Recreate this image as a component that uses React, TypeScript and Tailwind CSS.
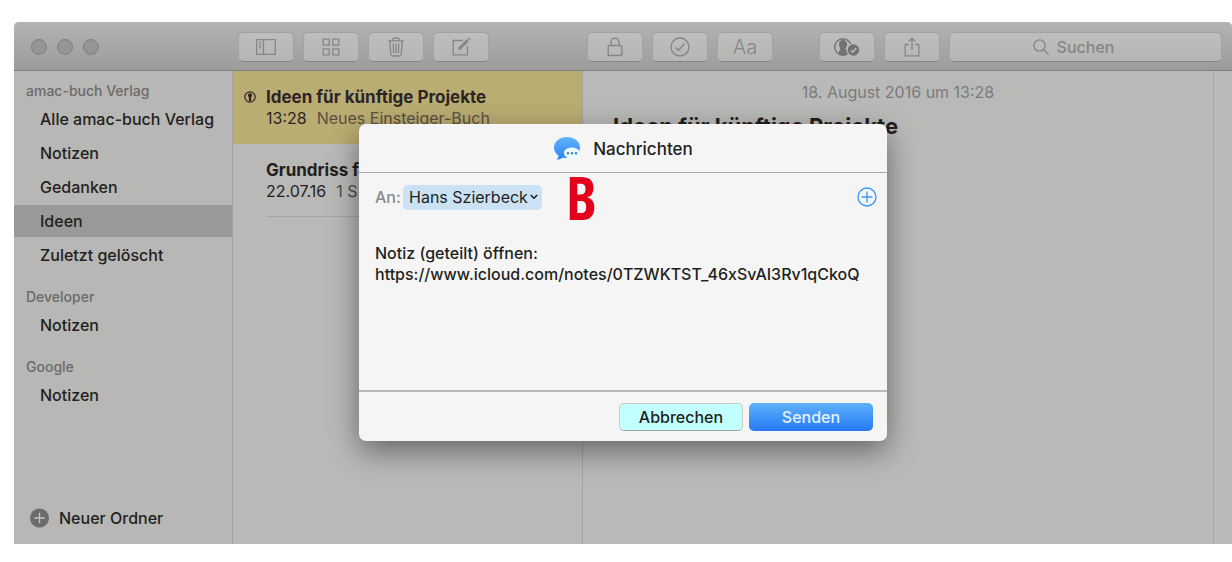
import type { ReactNode } from "react";

const sans = "font-['Inter','Liberation_Sans',sans-serif] font-medium";

function ToolButton({ label, children }: { label: string; children: ReactNode }) {
  return (
    <button
      type="button"
      aria-label={label}
      className="flex h-[30px] w-14 shrink-0 items-center justify-center rounded-[5px] border border-[#a2a2a1] border-b-[#848484] bg-linear-to-b from-[#bebebd] to-[#b6b6b5] text-[#868686]"
    >
      {children}
    </button>
  );
}

function Folder({ name, selected = false }: { name: string; selected?: boolean }) {
  return (
    <li className={selected ? "bg-[#999998]" : ""}>
      <a
        href="#"
        aria-current={selected ? "page" : undefined}
        className="block h-8 pl-[26px] text-base leading-8 whitespace-nowrap text-[#231f20]"
      >
        {name}
      </a>
    </li>
  );
}

function Account({ name, folders, selected }: { name: string; folders: string[]; selected?: string }) {
  return (
    <section className="mb-[14px]">
      <h2 className="h-6 pl-3 text-sm leading-6 text-[#6b6b6a]">{name}</h2>
      <ul className="flex flex-col gap-[2px]">
        {folders.map((f) => (
          <Folder key={f} name={f} selected={f === selected} />
        ))}
      </ul>
    </section>
  );
}

function Toolbar() {
  return (
    <header className="flex h-[49px] shrink-0 items-center border-b border-[#80807f] bg-linear-to-b from-[#b3b3b2] to-[#9c9c9b] pt-px">
      <div className="flex w-[219px] shrink-0 gap-[10px] pl-[17px]">
        {["Schließen", "Minimieren", "Vergrößern"].map((l) => (
          <button key={l} type="button" aria-label={l} className="size-4 rounded-full border border-[#7f7f7f] bg-[#959595]" />
        ))}
      </div>
      <div className="flex w-[350px] shrink-0 gap-[9px] pl-[5px]">
        <ToolButton label="Ordnerliste">
          <svg width="20" height="16" viewBox="0 0 20 16" fill="none" stroke="currentColor" strokeWidth="1.3">
            <path d="M.7.7h18.6v14.6H.7zM7.5.7v14.6M3 3.5h2.2M3 6h2.2M3 8.500h2.200" />
          </svg>
        </ToolButton>
        <ToolButton label="Anhänge">
          <svg width="18" height="18" viewBox="0 0 18 18" fill="none" stroke="currentColor" strokeWidth="1.3">
            <path d="M1.200 1.200h6v6h-6zM10.800 1.200h6v6h-6zM1.200 10.800h6v6h-6zM10.800 10.800h6v6h-6z" />
          </svg>
        </ToolButton>
        <ToolButton label="Löschen">
          <svg width="18" height="20" viewBox="0 0 18 20" fill="none" stroke="currentColor" strokeWidth="1.3">
            <path d="M1 3.800h16M6 3.500V2.200Q6 1 7.200 1h3.600Q12 1 12 2.200v1.300M2.800 4l1 13.500q.1 1.500 1.500 1.500h7.400q1.400 0 1.500-1.500l1-13.500M6.300 6.500l.3 9.500M9 6.500V16M11.700 6.500l-.3 9.500" />
          </svg>
        </ToolButton>
        <ToolButton label="Neue Notiz">
          <svg width="20" height="20" viewBox="0 0 20 20" fill="none" stroke="currentColor" strokeWidth="1.3">
            <path d="M12 3.500H2.200v14.300h14.300V9" />
            <path d="M7.800 10.300L15.800 2.300l2 2-8 8-2.800.8zM17 1.200l.8-.7 1.700 1.700-.8.8z" fill="currentColor" strokeWidth=".4" />
          </svg>
        </ToolButton>
      </div>
      <div className="flex min-w-0 flex-1 gap-[9px] pr-[10px] pl-1">
        <ToolButton label="Notiz sperren">
          <svg width="16" height="20" viewBox="0 0 16 20" fill="none" stroke="currentColor" strokeWidth="1.400">
            <rect x="1.200" y="8.500" width="13.600" height="10" rx="1" />
            <path d="M4 8.500V5.200a4 4 0 0 1 8 0v3.300" />
          </svg>
        </ToolButton>
        <ToolButton label="Checkliste">
          <svg width="20" height="20" viewBox="0 0 20 20" fill="none" stroke="currentColor" strokeWidth="1.400">
            <circle cx="10" cy="10" r="9" />
            <path d="M5.500 10.500l3 3 6-7" />
          </svg>
        </ToolButton>
        <ToolButton label="Format">
          <span className="text-xl font-light">Aa</span>
        </ToolButton>
        <span className="w-7" />
        <ToolButton label="Personen hinzufügen">
          <svg width="28" height="20" viewBox="0 0 28 20" className="text-[#727272]">
            <circle cx="10" cy="10" r="8.300" fill="none" stroke="currentColor" strokeWidth="1.400" />
            <path d="M10 3c2.700 0 4 1.800 4 4.200 0 1.600-.5 2.800-1.200 3.700-.3 1.600.2 2.300 1.500 2.900l-.6 3.700c-2 1.200-5.400 1.200-8.200-.5l.2-2.800c1.300-.6 1.700-1.500 1.500-3C6.500 10.200 6 8.900 6 7.200 6 4.800 7.300 3 10 3z" fill="currentColor" />
            <circle cx="20.500" cy="13" r="6.700" fill="#bababa" />
            <circle cx="20.500" cy="13" r="5.800" fill="currentColor" />
            <path d="M17.700 13.300l2 2 3.500-4.300" fill="none" stroke="#bababa" strokeWidth="1.400" />
          </svg>
        </ToolButton>
        <ToolButton label="Teilen">
          <svg width="16" height="20" viewBox="0 0 16 20" fill="none" stroke="currentColor" strokeWidth="1.300">
            <path d="M5 7.500H1.200v11.300h13.600V7.500H11M8 13V1.500M4.700 4.500L8 1.200l3.300 3.300" />
          </svg>
        </ToolButton>
        <label className="flex h-[30px] min-w-0 flex-1 items-center justify-center gap-2 rounded-[5px] border border-[#a2a2a1] border-b-[#848484] bg-linear-to-b from-[#bebebd] to-[#b6b6b5] pr-6 text-[#868686]">
          <svg width="16" height="16" viewBox="0 0 16 16" fill="none" stroke="currentColor" strokeWidth="1.400">
            <circle cx="6.500" cy="6.500" r="5.600" />
            <path d="M10.600 10.600l5 5" />
          </svg>
          <input
            type="search"
            aria-label="Suchen"
            placeholder="Suchen"
            className="field-sizing-content min-w-0 bg-transparent text-base outline-none placeholder:text-[#868686]"
          />
        </label>
      </div>
    </header>
  );
}

function ShareDialog() {
  return (
    <div
      role="dialog"
      aria-labelledby="dialog-title"
      className="absolute top-[102px] left-1/2 flex h-[317px] w-[528px] -translate-x-1/2 flex-col rounded-[7px] bg-[#f5f5f5] text-[#231f20] shadow-[0_10px_30px_rgba(0,0,0,0.45)]"
    >
      <div className="flex h-[49px] shrink-0 items-center justify-center gap-3 border-b border-[#a9a6a2] pt-[2px]">
        <svg width="28" height="26" viewBox="0 0 28 26">
          <defs>
            <linearGradient id="bubble" x1="0" y1="0" x2="0" y2="1">
              <stop offset="0" stopColor="#62b4fa" />
              <stop offset="1" stopColor="#2c83f2" />
            </linearGradient>
          </defs>
          <path d="M14 1c7.300 0 13 4.500 13 10.500S21.300 22 14 22c-1.600 0-3-.2-4.400-.6-1.500 1.500-3.800 2.200-6.200 2.200 1.300-1 2-2.500 2.200-4C2.700 17.700 1 14.800 1 11.500 1 5.500 6.700 1 14 1z" fill="url(#bubble)" />
          <path d="M18.800 11.500c4.500 0 8 2.300 8 5.500 0 1.800-1 3.300-2.600 4.300.1 1 .5 2 1.300 2.800-1.600 0-3-.5-4-1.400-4.900.9-10.500-1.200-10.500-5.700 0-3.200 3.400-5.500 7.800-5.500z" fill="#e9fbff" />
          <g fill="#3f80c8">
            <rect x="13.800" y="16" width="2.400" height="2.400" rx="1" />
            <rect x="17.800" y="16" width="2.400" height="2.400" rx="1" />
            <rect x="21.800" y="16" width="2.400" height="2.400" rx="1" />
          </g>
        </svg>
        <h1 id="dialog-title" className="text-[17px] leading-6">Nachrichten</h1>
      </div>
      <div className="flex h-12 shrink-0 items-center pr-[10px] pl-4">
        <span className="w-7 text-base text-[#8b8b8b]">An:</span>
        <button type="button" className="flex h-[25px] items-center gap-[2px] rounded-[5px] bg-[#cbe2f5] pr-1 pl-[6px] text-base font-normal">
          Hans Szierbeck
          <svg width="8" height="6" viewBox="0 0 8 6" fill="none" stroke="currentColor" strokeWidth="1.600">
            <path d="M.8 1L4 4.200 7.200 1" />
          </svg>
        </button>
        <span className="flex-1 pl-6 font-['Open_Sans_Condensed','Noto_Sans_Condensed','Roboto_Condensed','Open_Sans',sans-serif] text-[60px] leading-none font-bold text-[#e2001a]">B</span>
        <button type="button" aria-label="Empfänger hinzufügen" className="text-[#3b9cf7]">
          <svg width="20" height="20" viewBox="0 0 20 20" fill="none" stroke="currentColor" strokeWidth="1.400">
            <circle cx="10" cy="10" r="9" />
            <path d="M10 4.500v11M4.500 10h11" />
          </svg>
        </button>
      </div>
      <textarea
        aria-label="Nachricht"
        readOnly
        value={"Notiz (geteilt) öffnen:\nhttps://www.icloud.com/notes/0TZWKTST_46xSvAI3Rv1qCkoQ"}
        className="min-h-0 flex-1 resize-none overflow-hidden bg-transparent pt-[22px] pl-4 text-base leading-[21px] whitespace-pre outline-none"
      />
      <div className="flex h-[51px] shrink-0 items-center justify-end gap-[6px] border-t-2 border-[#b7b9b8] pr-[14px]">
        <button type="button" className="h-7 w-[124px] rounded-[5px] border border-[#c9c9c6] border-b-[#a5a5a3] bg-[#c2ffff] text-base">
          Abbrechen
        </button>
        <button type="button" className="h-7 w-[124px] rounded-[5px] bg-linear-to-b from-[#5fb0fa] to-[#2678f4] text-base text-[#e4f2ff]">
          Senden
        </button>
      </div>
    </div>
  );
}

export default function App() {
  return (
    <div className={`flex h-screen flex-col bg-white pt-[22px] pb-[18px] pl-[14px] ${sans}`}>
      <div className="relative flex min-h-0 flex-1 flex-col overflow-hidden rounded-t-[5px] bg-[#b9b9b8]">
        <Toolbar />
        <div className="flex min-h-0 flex-1">
          <nav className="flex w-[219px] shrink-0 flex-col border-r border-[#a3a3a2] bg-[#b7b7b5] pt-2">
            <Account name="amac-buch Verlag" folders={["Alle amac-buch Verlag", "Notizen", "Gedanken", "Ideen", "Zuletzt gelöscht"]} selected="Ideen" />
            <Account name="Developer" folders={["Notizen"]} />
            <Account name="Google" folders={["Notizen"]} />
            <button type="button" className="mt-auto mb-4 flex items-center gap-[10px] pl-4 text-base leading-5 text-[#231f20]">
              <svg width="19" height="20" viewBox="0 0 20 20">
                <circle cx="10" cy="10" r="10" fill="#6a6c6e" />
                <path d="M10 4.500v11M4.500 10h11" stroke="#c4c4c4" strokeWidth="1.400" />
              </svg>
              Neuer Ordner
            </button>
          </nav>
          <div className="w-[350px] shrink-0 overflow-hidden border-r border-[#a3a3a2]">
            <article className="flex h-[73px] bg-[#baad73] pt-4 text-[#2d2426]">
              <svg width="12" height="12" viewBox="0 0 12 12" className="mt-1 mr-[10px] ml-[11px]">
                <circle cx="6" cy="6" r="5.200" fill="none" stroke="currentColor" strokeWidth="1.200" />
                <path d="M6 2.200c1.400 0 2 .9 2 2.100 0 .9-.4 1.600-.9 2v3.900H4.900V6.300C4.400 5.900 4 5.200 4 4.300c0-1.200.6-2.100 2-2.100z" fill="currentColor" />
              </svg>
              <div>
                <h3 className="text-[17px] leading-5 font-bold">Ideen für künftige Projekte</h3>
                <p className="flex gap-[10px] text-base leading-[22px] font-normal">
                  <span>13:28</span>
                  <span className="text-[#5b5040]">Neues Einsteiger-Buch</span>
                </p>
              </div>
            </article>
            <article className="ml-[33px] h-[73px] border-b border-[#a6a6a5] pt-4 text-[#231f20]">
              <h3 className="text-[17px] leading-5 font-bold">Grundriss f</h3>
              <p className="flex gap-[10px] text-base leading-[22px] font-normal">
                <span>22.07.16</span>
                <span className="text-[#4c4c4c]">1 S</span>
              </p>
            </article>
          </div>
          <main className="min-w-0 flex-1 border-r border-[#a8a8a7] px-[30px] pt-[11px]">
            <p className="text-center text-base leading-5 font-normal text-[#7b7b7b]">18. August 2016 um 13:28</p>
            <h2 className="mt-3 text-[22px] leading-6 font-bold text-[#231f20]">Ideen für künftige Projekte</h2>
          </main>
          <div className="w-[18px] shrink-0 bg-[#bababa]" />
        </div>
        <ShareDialog />
      </div>
    </div>
  );
}
